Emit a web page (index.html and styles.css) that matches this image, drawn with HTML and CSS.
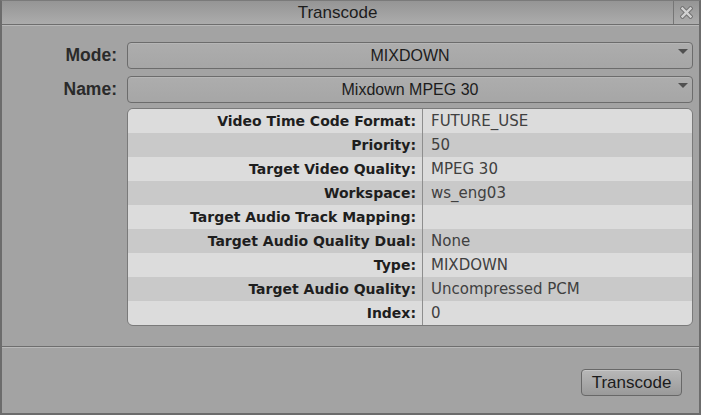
FILE: index.html
```html
<!DOCTYPE html>
<html>
<head>
<meta charset="utf-8">
<link rel="stylesheet" href="styles.css">
</head>
<body>
<div class="window">
  <div class="titlebar">
    <div class="title">Transcode</div>
    <div class="close">
      <svg width="13" height="13" viewBox="0 0 13 13">
        <path d="M2.5 2.5 L10.5 10.5 M10.5 2.5 L2.5 10.5" stroke="#727272" stroke-width="4.4" stroke-linecap="square"/>
        <path d="M2.5 2.5 L10.5 10.5 M10.5 2.5 L2.5 10.5" stroke="#d2d2d2" stroke-width="2.4" stroke-linecap="square"/>
      </svg>
    </div>
  </div>
  <div class="content">
    <div class="form">
      <div class="label">Mode:</div>
      <div class="select"><span>MIXDOWN</span><i class="arrow"></i></div>
      <div class="label">Name:</div>
      <div class="select"><span>Mixdown MPEG 30</span><i class="arrow"></i></div>
      <div></div>
      <div class="props">
        <div class="row"><div class="k">Video Time Code Format:</div><div class="v">FUTURE_USE</div></div>
        <div class="row alt"><div class="k">Priority:</div><div class="v">50</div></div>
        <div class="row"><div class="k">Target Video Quality:</div><div class="v">MPEG 30</div></div>
        <div class="row alt"><div class="k">Workspace:</div><div class="v">ws_eng03</div></div>
        <div class="row"><div class="k">Target Audio Track Mapping:</div><div class="v"></div></div>
        <div class="row alt"><div class="k">Target Audio Quality Dual:</div><div class="v">None</div></div>
        <div class="row"><div class="k">Type:</div><div class="v">MIXDOWN</div></div>
        <div class="row alt"><div class="k">Target Audio Quality:</div><div class="v">Uncompressed PCM</div></div>
        <div class="row"><div class="k">Index:</div><div class="v">0</div></div>
      </div>
    </div>
  </div>
  <div class="footer">
    <button class="btn">Transcode</button>
  </div>
</div>
</body>
</html>
```

FILE: styles.css
```css
html, body {
  margin: 0;
  padding: 0;
  background: #a3a3a3;
}
body {
  width: 701px;
  height: 415px;
  overflow: hidden;
  font-family: "Liberation Sans", Arial, sans-serif;
}
.window {
  box-sizing: border-box;
  width: 701px;
  height: 415px;
  border-left: 2px solid #6c6c6c;
  border-right: 2px solid #6c6c6c;
  border-bottom: 2px solid #6c6c6c;
  border-top: 1px solid #7a7a7a;
  background: #a3a3a3;
  display: flex;
  flex-direction: column;
}
.titlebar {
  height: 23px;
  display: flex;
  background: linear-gradient(#959595, #acacac);
  border-bottom: 1px solid #6e6e6e;
  box-shadow: 0 1px 0 #b9b9b9;
}
.title {
  flex: 1;
  text-align: center;
  font-size: 17px;
  line-height: 24px;
  color: #1c1c1c;
}
.close {
  width: 25px;
  border-left: 1px solid #767676;
  display: flex;
  align-items: center;
  justify-content: center;
}
.content {
  flex: 1;
  padding: 17px 6px 0 0;
}
.form {
  display: grid;
  grid-template-columns: 115px 1fr;
  column-gap: 10px;
  row-gap: 7px;
}
.label {
  text-align: right;
  font-weight: bold;
  font-size: 17.5px;
  color: #2a2a2a;
  line-height: 27px;
}
.select {
  position: relative;
  box-sizing: border-box;
  height: 27px;
  border: 1px solid #6c6c6c;
  border-radius: 4px;
  background: linear-gradient(#adadad, #a6a6a6);
  box-shadow: inset 0 1px 0 #b6b6b6;
  text-align: center;
  font-size: 16px;
  line-height: 25px;
  color: #1c1c1c;
}
.arrow {
  position: absolute;
  right: 4px;
  top: 6px;
  width: 0;
  height: 0;
  border-left: 5px solid transparent;
  border-right: 5px solid transparent;
  border-top: 5px solid #505050;
}
.props {
  margin-top: -2px;
  border: 1px solid #7a7a7a;
  border-radius: 6px;
  overflow: hidden;
  font-family: "DejaVu Sans", Verdana, sans-serif;
}
.row {
  display: grid;
  grid-template-columns: 295px 1fr;
  height: 24px;
  background: #dcdcdc;
}
.row.alt {
  background: #c9c9c9;
}
.k {
  text-align: right;
  font-weight: bold;
  font-size: 14px;
  line-height: 24px;
  color: #1e1e1e;
  padding-right: 6px;
  border-right: 1px solid #8e8e8e;
}
.v {
  font-size: 15px;
  line-height: 24px;
  color: #404040;
  padding-left: 8px;
}
.footer {
  height: 44px;
  border-top: 1px solid #6e6e6e;
  box-shadow: inset 0 1px 0 #b9b9b9;
  display: flex;
  justify-content: flex-end;
  align-items: flex-start;
  padding: 22px 17px 0 0;
}
.btn {
  box-sizing: border-box;
  width: 101px;
  height: 27px;
  border: 1px solid #686868;
  border-radius: 4px;
  background: linear-gradient(#b8b8b8, #9a9a9a);
  box-shadow: inset 0 1px 0 #c8c8c8;
  font-family: "Liberation Sans", Arial, sans-serif;
  font-size: 17px;
  color: #1c1c1c;
  padding: 0;
}
```
